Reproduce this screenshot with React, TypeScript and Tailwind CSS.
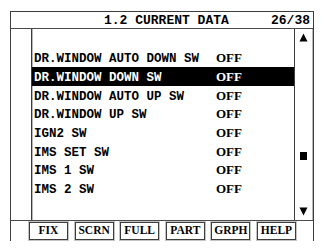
const rows = [
  { name: "", value: "" },
  { name: "DR.WINDOW AUTO DOWN SW", value: "OFF" },
  { name: "DR.WINDOW DOWN SW", value: "OFF", selected: true },
  { name: "DR.WINDOW AUTO UP SW", value: "OFF" },
  { name: "DR.WINDOW UP SW", value: "OFF" },
  { name: "IGN2 SW", value: "OFF" },
  { name: "IMS SET SW", value: "OFF" },
  { name: "IMS 1 SW", value: "OFF" },
  { name: "IMS 2 SW", value: "OFF" },
];

const buttons = ["FIX", "SCRN", "FULL", "PART", "GRPH", "HELP"];

const mono = "font-['Liberation_Mono',monospace] font-bold";
const serif = "font-['Liberation_Serif',serif] font-bold";

export default function App() {
  return (
    <div className="h-[250px] w-[325px] overflow-hidden bg-white pl-[10px] pt-[11px] text-black">
      <div className="flex w-[304px] flex-col border-x border-t border-[#3c3c3c]">
        {/* title bar */}
        <div className={`flex h-[17px] items-center border-b border-[#4a4a4a] text-[13px] leading-none ${mono}`}>
          <span className="ml-[93px]">1.2 CURRENT DATA</span>
          <span className="ml-auto mr-[3px]">26/38</span>
        </div>

        {/* data area */}
        <div className="flex h-[192px] border-b border-[#4a4a4a]">
          <div className="w-[20px]" />
          <div className="flex w-[263px] flex-col border-l border-[#3c3c3c] pt-[1px] shadow-[inset_1px_0_0_#b8b8b8]">
            {rows.map((r, i) => (
              <div
                key={i}
                className={`flex h-[18.7px] shrink-0 items-center pt-[1px] ${r.selected ? "bg-black text-white" : ""}`}
              >
                <div className="flex items-baseline">
                  <span className={`w-[184px] pl-[2px] text-[12.5px] leading-none ${mono}`}>{r.name}</span>
                  <span className={`text-[13px] leading-none ${serif}`}>{r.value}</span>
                </div>
              </div>
            ))}
          </div>
          <div className="flex w-[19px] flex-col items-center border-l border-[#3c3c3c] pt-[4px] pb-[4px] shadow-[inset_-1px_0_0_#b8b8b8]">
            <svg width="9" height="9" viewBox="0 0 9 9" className="ml-[-2px]">
              <path d="M4.5 0.5 L8.5 8.5 L0.5 8.5 Z" fill="#000" />
            </svg>
            <div className="ml-[-2px] mt-[110px] h-[8px] w-[7px] bg-black" />
            <div className="flex-1" />
            <svg width="9" height="9" viewBox="0 0 9 9" className="ml-[-2px]">
              <path d="M0.5 0.5 L8.5 0.5 L4.5 8.5 Z" fill="#000" />
            </svg>
          </div>
        </div>

        {/* function keys */}
        <div className="flex h-[20px] items-start gap-[6.6px] pl-[18px] pt-[1px]">
          {buttons.map((b) => (
            <div
              key={b}
              className={`flex h-[18px] w-[39px] items-center justify-center border border-[#3c3c3c] shadow-[0_0_0_1px_#c4c4c4] text-[11.5px] leading-none ${serif}`}
            >
              {b}
            </div>
          ))}
        </div>
      </div>
    </div>
  );
}
